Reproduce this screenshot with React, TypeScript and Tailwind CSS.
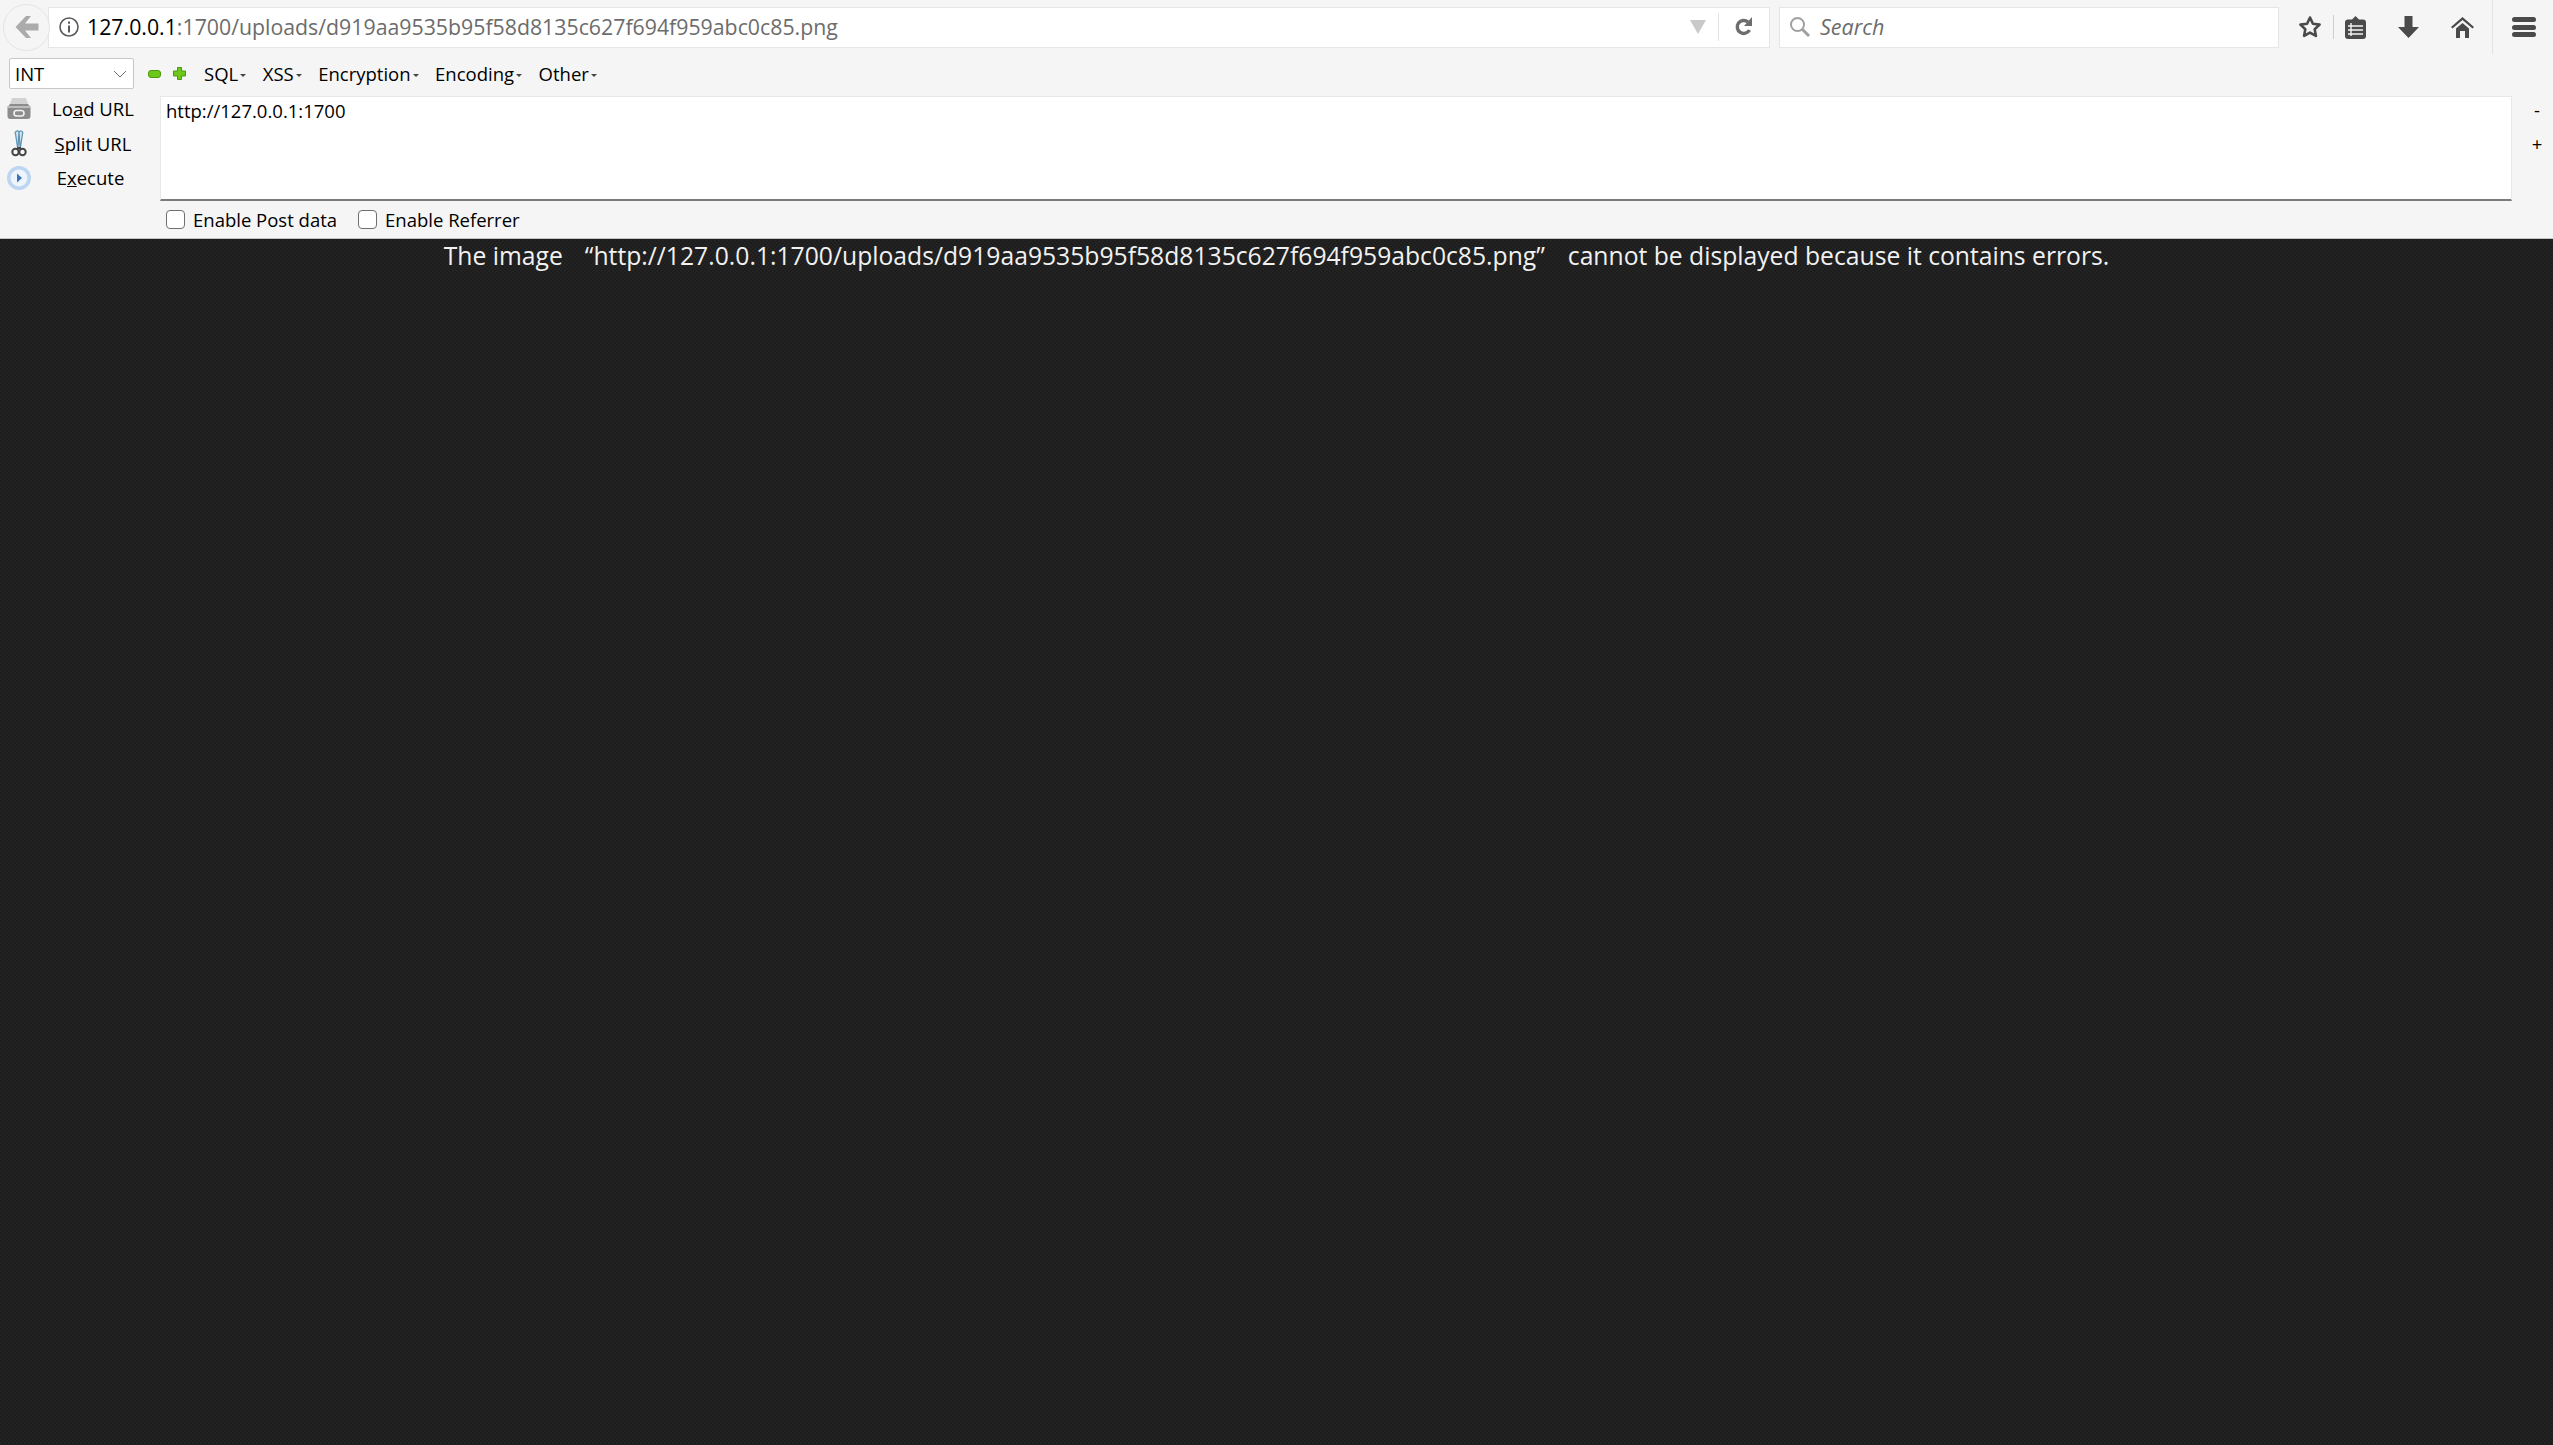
const imageUrl = 'http://127.0.0.1:1700/uploads/d919aa9535b95f58d8135c627f694f959abc0c85.png'

function MenuItem({ label }: { label: string }) {
  return (
    <span className="flex items-center">
      {label}
      <span className="ml-[2px] mt-[3px] border-x-[3px] border-t-[3px] border-x-transparent border-t-[#444]" />
    </span>
  )
}

function SideButton({ icon, children, pad }: { icon: React.ReactNode; children: React.ReactNode; pad: string }) {
  return (
    <div className="flex h-[34.5px] items-center">
      <div className="flex w-[38px] justify-center">{icon}</div>
      <div className={`w-[122px] text-center ${pad}`}>{children}</div>
    </div>
  )
}

function LoadIcon() {
  return (
    <svg width="24" height="22" viewBox="0 0 24 22">
      <path d="M5 0h14l2 6H3z" fill="#d2d2d2" />
      <path d="M3 6h18l2.5 3v9a3 3 0 0 1-3 3h-17a3 3 0 0 1-3-3V9z" fill="#8c8c8c" />
      <rect x="0.5" y="8" width="23" height="2" fill="#bdbdbd" />
      <rect x="7" y="12.5" width="10" height="5.5" rx="2.7" fill="none" stroke="#f1f1f1" strokeWidth="1.6" />
    </svg>
  )
}

function SplitIcon() {
  return (
    <svg width="16" height="27" viewBox="0 0 16 27">
      <path d="M6.5 17 4.5 4a2 2 0 0 1 3.5-2l1 15M9.5 17l2-13a2 2 0 0 0-3.5-2l-1 15" fill="#cfe2ee" stroke="#5b93b5" strokeWidth="1.2" />
      <circle cx="4.5" cy="22" r="3.2" fill="none" stroke="#444" strokeWidth="2" />
      <circle cx="11.5" cy="22" r="3.2" fill="none" stroke="#444" strokeWidth="2" />
      <path d="M6 18h4" stroke="#444" strokeWidth="2" />
    </svg>
  )
}

function ExecuteIcon() {
  return (
    <svg width="24" height="24" viewBox="0 0 24 24">
      <circle cx="12" cy="12" r="12" fill="#bcd6f2" />
      <circle cx="12" cy="12" r="8.5" fill="#eef4fb" />
      <path d="M10 7.5l5 4.5-5 4.5z" fill="#3a73b8" />
    </svg>
  )
}

export default function App() {
  return (
    <div className="flex min-h-screen flex-col bg-[#202020] bg-[repeating-conic-gradient(#232323_0%_25%,#1d1d1d_0%_50%)] bg-[size:4px_4px] font-['Open_Sans','Noto_Sans',sans-serif]">
      <div className="flex h-[239px] flex-col border-b border-[#c4c4c4] bg-[#f5f5f5] text-[18.5px] text-black">
        {/* nav bar */}
        <div className="flex h-[54px] items-center pl-[3px]">
          <div className="z-10 flex h-[47px] w-[47px] items-center justify-center rounded-full border border-[#e4e4e4] bg-[#f5f5f5]">
            <svg width="24" height="22" viewBox="0 0 24 22">
              <path d="M11 0 0.5 11 11 22h5l-6-7.500h13.500v-7H10L16 0z" fill="#ababab" />
            </svg>
          </div>
          <div className="-ml-[2px] flex h-[41px] w-[1722px] items-center border border-[#e6e6e6] bg-white pl-[9px]">
            <svg width="22" height="22" viewBox="0 0 22 22" fill="none">
              <circle cx="11" cy="11" r="9" stroke="#5a5a5a" strokeWidth="1.6" />
              <rect x="10" y="9.5" width="2" height="7" fill="#5a5a5a" />
              <rect x="10" y="5.5" width="2" height="2.2" fill="#5a5a5a" />
            </svg>
            <span className="ml-[7px] flex-1 whitespace-nowrap text-[21.3px]">
              127.0.0.1<span className="text-[#6c6c6c]">:1700/uploads/d919aa9535b95f58d8135c627f694f959abc0c85.png</span>
            </span>
            <span className="mr-[12px] border-x-[8px] border-t-[14px] border-x-transparent border-t-[#c9c9c9]" />
            <div className="h-[28px] w-px bg-[#e2e2e2]" />
            <svg className="mx-[15px]" width="20" height="22" viewBox="0 0 20 22" fill="none">
              <path d="M15.5 14a6.5 6.5 0 1 1-1.5-8" stroke="#6d6d6d" strokeWidth="3.4" />
              <path d="M18 1v9h-8z" fill="#6d6d6d" />
            </svg>
          </div>
          <div className="ml-[9px] flex h-[41px] w-[500px] items-center border border-[#e6e6e6] bg-white pl-[9px]">
            <svg width="22" height="22" viewBox="0 0 22 22" fill="none">
              <circle cx="8.5" cy="8.5" r="6.5" stroke="#a0a0a0" strokeWidth="2" />
              <path d="M13 13l7 7" stroke="#a0a0a0" strokeWidth="3" />
            </svg>
            <span className="ml-[9px] text-[21.5px] italic text-[#6c6c6c]">Search</span>
          </div>
          <div className="flex h-[54px] flex-1 items-center">
            <svg className="ml-[19px]" width="24" height="24" viewBox="0 0 24 24" fill="none">
              <path d="M12 2.5l2.9 6.2 6.7 0.9-4.9 4.6 1.2 6.7-5.9-3.3-5.9 3.3 1.2-6.7-4.9-4.6 6.7-0.9z" stroke="#4a4a4a" strokeWidth="2.6" strokeLinejoin="round" />
            </svg>
            <div className="ml-[11px] h-[24px] w-px bg-[#cfcfcf]" />
            <svg className="ml-[11px]" width="21" height="23" viewBox="0 0 21 23">
              <path d="M10.5 0l3.5 3.5h4a3 3 0 0 1 3 3V20a3 3 0 0 1-3 3H3a3 3 0 0 1-3-3V6.5a3 3 0 0 1 3-3h4z" fill="#4a4a4a" />
              <path d="M6 7v13M3 10h15M3 14h15M3 18h15" stroke="#f5f5f5" strokeWidth="1.4" />
            </svg>
            <svg className="ml-[32px]" width="21" height="22" viewBox="0 0 21 22">
              <path d="M6.5 0h8v11h6.5L10.5 22 0 11h6.5z" fill="#4a4a4a" />
            </svg>
            <svg className="ml-[32px]" width="23" height="21" viewBox="0 0 23 21">
              <path d="M11.5 0l11.5 10-1.5 1.500-10-8.500-10 8.500L0 10z" fill="#4a4a4a" />
              <path d="M11.5 6l6.500 5.500V21h-4v-7H9v7H5v-9.500z" fill="#4a4a4a" />
            </svg>
            <div className="ml-[18px] h-[54px] w-px bg-[#e2e2e2]" />
            <div className="ml-[19px] flex w-[24px] flex-col gap-[2.5px]">
              <div className="h-[5px] rounded-[3px] bg-[#4a4a4a]" />
              <div className="h-[5px] rounded-[3px] bg-[#4a4a4a]" />
              <div className="h-[5px] rounded-[3px] bg-[#4a4a4a]" />
            </div>
          </div>
        </div>

        {/* hackbar menu */}
        <div className="mt-[4px] flex h-[31px] items-center pl-[9px]">
          <div className="flex h-[31px] w-[125px] items-center justify-between rounded-[2px] border border-[#c8c8c8] bg-white pl-[5px] pr-[6px]">
            INT
            <svg width="14" height="8" viewBox="0 0 14 8" fill="none">
              <path d="M1 1l6 6 6-6" stroke="#707070" strokeWidth="1" />
            </svg>
          </div>
          <div className="ml-[14px] h-[8px] w-[13px] rounded-[3px] border border-[#4b9a0c] bg-[#6ec81a]" />
          <svg className="ml-[12px]" width="13" height="13" viewBox="0 0 13 13">
            <path d="M4.5 0.5h4v3.500h4v5h-4v3.500h-4V9h-4V4h4z" fill="#6ec81a" stroke="#4b9a0c" strokeLinejoin="round" />
          </svg>
          <div className="ml-[18px] flex gap-[16.5px]">
            <MenuItem label="SQL" />
            <MenuItem label="XSS" />
            <MenuItem label="Encryption" />
            <MenuItem label="Encoding" />
            <MenuItem label="Other" />
          </div>
        </div>

        {/* hackbar body */}
        <div className="mt-[7px] flex h-[105px]">
          <div className="-mt-[4px] flex w-[160px] shrink-0 flex-col">
            <SideButton icon={<LoadIcon />} pad="pr-[12px]">
              Lo<u>a</u>d URL
            </SideButton>
            <SideButton icon={<SplitIcon />} pad="pr-[12px]">
              <u>S</u>plit URL
            </SideButton>
            <SideButton icon={<ExecuteIcon />} pad="pr-[17px]">
              E<u>x</u>ecute
            </SideButton>
          </div>
          <div className="w-[2352px] border border-b-2 border-[#e8e8e8] border-b-[#7b7b7b] bg-white pl-[5px]">
            http://127.0.0.1:1700
          </div>
          <div className="-mt-[3px] flex flex-1 flex-col items-center pl-[9px] leading-[34px]">
            <span>-</span>
            <span>+</span>
          </div>
        </div>

        {/* post data options */}
        <div className="flex h-[37px] items-center pl-[166px]">
          <input type="checkbox" className="h-[19px] w-[19px] appearance-none rounded-[4px] border border-[#6f6f6f] bg-white" />
          <span className="ml-[8px]">Enable Post data</span>
          <input type="checkbox" className="ml-[21px] h-[19px] w-[19px] appearance-none rounded-[4px] border border-[#6f6f6f] bg-white" />
          <span className="ml-[8px]">Enable Referrer</span>
        </div>
      </div>

      {/* image error message */}
      <div className="-mt-[2px] flex justify-center text-[24.7px] text-[#f1f1f1]">
        <span>The image</span>
        <span className="ml-[22px]">“{imageUrl}”</span>
        <span className="ml-[23px]">cannot be displayed because it contains errors.</span>
      </div>
    </div>
  )
}
